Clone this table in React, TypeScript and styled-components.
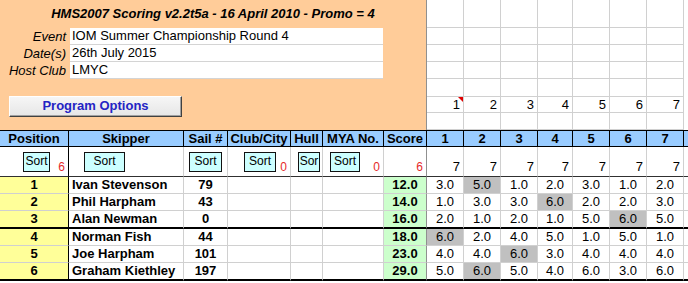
import styled, { createGlobalStyle } from "styled-components";

const GlobalStyle = createGlobalStyle`
  * {
    box-sizing: border-box;
  }
  body {
    margin: 0;
    background: #fff;
    color: #000;
    font-family: "Liberation Sans", Arial, sans-serif;
    font-size: 13px;
  }
`;

type Result = {
  pos: number;
  skipper: string;
  sail: string;
  score: string;
  races: number[];
  drop: number;
};

const results: Result[] = [
  { pos: 1, skipper: "Ivan Stevenson", sail: "79", score: "12.0", races: [3, 5, 1, 2, 3, 1, 2], drop: 1 },
  { pos: 2, skipper: "Phil Harpham", sail: "43", score: "14.0", races: [1, 3, 3, 6, 2, 2, 3], drop: 3 },
  { pos: 3, skipper: "Alan Newman", sail: "0", score: "16.0", races: [2, 1, 2, 1, 5, 6, 5], drop: 5 },
  { pos: 4, skipper: "Norman Fish", sail: "44", score: "18.0", races: [6, 2, 4, 5, 1, 5, 1], drop: 0 },
  { pos: 5, skipper: "Joe Harpham", sail: "101", score: "23.0", races: [4, 4, 6, 3, 4, 4, 4], drop: 2 },
  { pos: 6, skipper: "Graham Kiethley", sail: "197", score: "29.0", races: [5, 6, 5, 4, 6, 3, 6], drop: 1 },
];

const raceWidths = [37, 37, 37, 35, 37, 37, 37];
const raceCols = raceWidths.map((w) => `${w}px`).join(" ");

type SortSpec = {
  title: string;
  left?: number;
  width?: number;
  label?: string;
  count?: string;
};

// the Hull button is too narrow for its caption, so it only shows "Sor"
const sortCols: SortSpec[] = [
  { title: "Position", left: 23, width: 27, count: "6" },
  { title: "Skipper", left: 15, width: 41 },
  { title: "Sail #", left: 5, width: 33 },
  { title: "Club/City", left: 16, width: 32, count: "0" },
  { title: "Hull", left: 7, width: 22, label: "Sor" },
  { title: "MYA No.", left: 7, width: 30, count: "0" },
  { title: "Score", count: "6" },
];

const App = () => {
  return (
    <>
      <GlobalStyle />
      <Sheet>
        <Top>
          <Panel>
            <Title>HMS2007 Scoring v2.2t5a - 16 April 2010 - Promo = 4</Title>
            <InfoRow>
              <InfoLabel>Event</InfoLabel>
              <InfoValue>IOM Summer Championship Round 4</InfoValue>
            </InfoRow>
            <InfoRow>
              <InfoLabel>Date(s)</InfoLabel>
              <InfoValue>26th July 2015</InfoValue>
            </InfoRow>
            <InfoRow>
              <InfoLabel>Host Club</InfoLabel>
              <InfoValue>LMYC</InfoValue>
            </InfoRow>
            <OptionsButton>Program Options</OptionsButton>
          </Panel>
          <RaceGrid>
            {[0, 1, 2, 3, 4].map((r) =>
              raceWidths.map((_, c) => <GridCell key={`${r}-${c}`} $row={r} />)
            )}
            {raceWidths.map((_, c) => (
              <GridCell key={`n-${c}`} $row={5} $flagged={c === 0}>
                {c + 1}
              </GridCell>
            ))}
            {raceWidths.map((_, c) => (
              <GridCell key={`b-${c}`} $row={6} />
            ))}
          </RaceGrid>
        </Top>

        <Table>
          {sortCols.map((s) => (
            <HeadCell key={s.title}>{s.title}</HeadCell>
          ))}
          {raceWidths.map((_, c) => (
            <HeadCell key={`h-${c}`}>{c + 1}</HeadCell>
          ))}
          <HeadCell />

          {sortCols.map((s, i) => (
            <SortCell key={`s-${s.title}`} $edge={i === 0 ? "#000" : i === 6 ? "#909090" : "#d0d0d0"}>
              {s.width && (
                <SortButton $left={s.left ?? 0} $width={s.width}>
                  {s.label ?? "Sort"}
                </SortButton>
              )}
              {s.count && <Count>{s.count}</Count>}
            </SortCell>
          ))}
          {raceWidths.map((_, c) => (
            <SortCell key={`sr-${c}`}>
              <Entries>7</Entries>
            </SortCell>
          ))}
          <SortCell />

          {results.map((r) => {
            const thick = r.pos % 3 === 0;
            return [
              <Cell key={`p${r.pos}`} $thick={thick} $bg="#ffff99" $bold $edge="#000">
                {r.pos}
              </Cell>,
              <Cell key={`k${r.pos}`} $thick={thick} $bold $align="left">
                {r.skipper}
              </Cell>,
              <Cell key={`n${r.pos}`} $thick={thick} $bold>
                {r.sail}
              </Cell>,
              <Cell key={`c${r.pos}`} $thick={thick} />,
              <Cell key={`h${r.pos}`} $thick={thick} />,
              <Cell key={`m${r.pos}`} $thick={thick} />,
              <Cell key={`s${r.pos}`} $thick={thick} $bg="#ccffcc" $bold $edge="#909090">
                {r.score}
              </Cell>,
              ...r.races.map((v, c) => (
                <Cell key={`r${r.pos}-${c}`} $thick={thick} $bg={c === r.drop ? "#c0c0c0" : undefined}>
                  {v.toFixed(1)}
                </Cell>
              )),
              <Cell key={`e${r.pos}`} $thick={thick} />,
            ];
          })}
        </Table>
      </Sheet>
    </>
  );
};

export default App;

const Sheet = styled.div`
  width: 688px;
  height: 283px;
  overflow: hidden;
  background: #fff;
`;

const Top = styled.div`
  display: flex;
  height: 130px;
`;

const Panel = styled.div`
  width: 427px;
  flex-shrink: 0;
  background: #ffcc99;
  border-right: 1px solid #909090;
  display: flex;
  flex-direction: column;
`;

const Title = styled.div`
  height: 28px;
  line-height: 28px;
  text-align: center;
  font-weight: bold;
  font-style: italic;
`;

const InfoRow = styled.div`
  display: grid;
  grid-template-columns: 70px 313px;
  height: 17px;
`;

const InfoLabel = styled.div`
  font-style: italic;
  text-align: right;
  padding-right: 4px;
  line-height: 17px;
`;

const InfoValue = styled.div`
  background: #fff;
  border-bottom: 1px solid #d4d4d4;
  padding-left: 2px;
  line-height: 16px;
  white-space: nowrap;
`;

const OptionsButton = styled.div`
  margin: 17px 0 0 9px;
  width: 173px;
  height: 21px;
  line-height: 18px;
  text-align: center;
  font-weight: bold;
  color: #2424c4;
  background: linear-gradient(#f6f6f6, #e6e6e6);
  border: 1px solid;
  border-color: #fff #404040 #404040 #fff;
  box-shadow: inset -1px -1px 0 #a0a0a0;
`;

const RaceGrid = styled.div`
  display: grid;
  grid-template-columns: ${raceCols} 1fr;
  grid-template-rows: 28px 17px 17px 17px 18px 16px 17px;
  flex: 1;
`;

const GridCell = styled.div<{ $row: number; $flagged?: boolean }>`
  grid-row: ${(p) => p.$row + 1};
  position: relative;
  border-right: 1px solid #d0d0d0;
  border-bottom: 1px solid #d0d0d0;
  text-align: right;
  padding-right: 3px;
  line-height: 16px;

  &::after {
    content: "";
    display: ${(p) => (p.$flagged ? "block" : "none")};
    position: absolute;
    top: 0;
    right: 0;
    border-top: 5px solid #e00000;
    border-left: 5px solid transparent;
  }
`;

const Table = styled.div`
  display: grid;
  grid-template-columns: 69px 115px 44px 63px 32px 61px 43px ${raceCols} 1fr;
`;

const HeadCell = styled.div`
  height: 17px;
  line-height: 15px;
  background: #99ccff;
  font-weight: bold;
  text-align: center;
  white-space: nowrap;
  overflow: hidden;
  border-top: 1px solid #000;
  border-bottom: 1px solid #000;
  border-right: 1px solid #000;
`;

const SortCell = styled.div<{ $edge?: string }>`
  height: 30px;
  display: flex;
  align-items: center;
  border-right: 1px solid ${(p) => p.$edge ?? "#d0d0d0"};
  border-bottom: 1px solid #303030;
`;

const SortButton = styled.div<{ $left: number; $width: number }>`
  margin-left: ${(p) => p.$left}px;
  width: ${(p) => p.$width}px;
  height: 20px;
  flex-shrink: 0;
  background: #ccffff;
  border: 1px solid #111;
  font-size: 12px;
  line-height: 17px;
  white-space: nowrap;
  text-align: center;
`;

const Count = styled.span`
  margin-left: auto;
  align-self: flex-end;
  padding: 0 3px 2px 0;
  font-size: 12px;
  line-height: 14px;
  color: #e62a2a;
`;

const Entries = styled.span`
  margin-left: auto;
  align-self: flex-end;
  padding: 0 3px 2px 0;
  line-height: 15px;
`;

const Cell = styled.div<{
  $bg?: string;
  $align?: "left" | "center" | "right";
  $bold?: boolean;
  $thick?: boolean;
  $edge?: string;
}>`
  height: ${(p) => (p.$thick ? 18 : 17)}px;
  line-height: 16px;
  padding: 0 3px;
  background: ${(p) => p.$bg ?? "#fff"};
  text-align: ${(p) => p.$align ?? "center"};
  font-weight: ${(p) => (p.$bold ? "bold" : "normal")};
  white-space: nowrap;
  overflow: hidden;
  border-right: 1px solid ${(p) => p.$edge ?? "#d0d0d0"};
  border-bottom: ${(p) => (p.$thick ? "2px solid #000" : "1px solid #d0d0d0")};
`;
